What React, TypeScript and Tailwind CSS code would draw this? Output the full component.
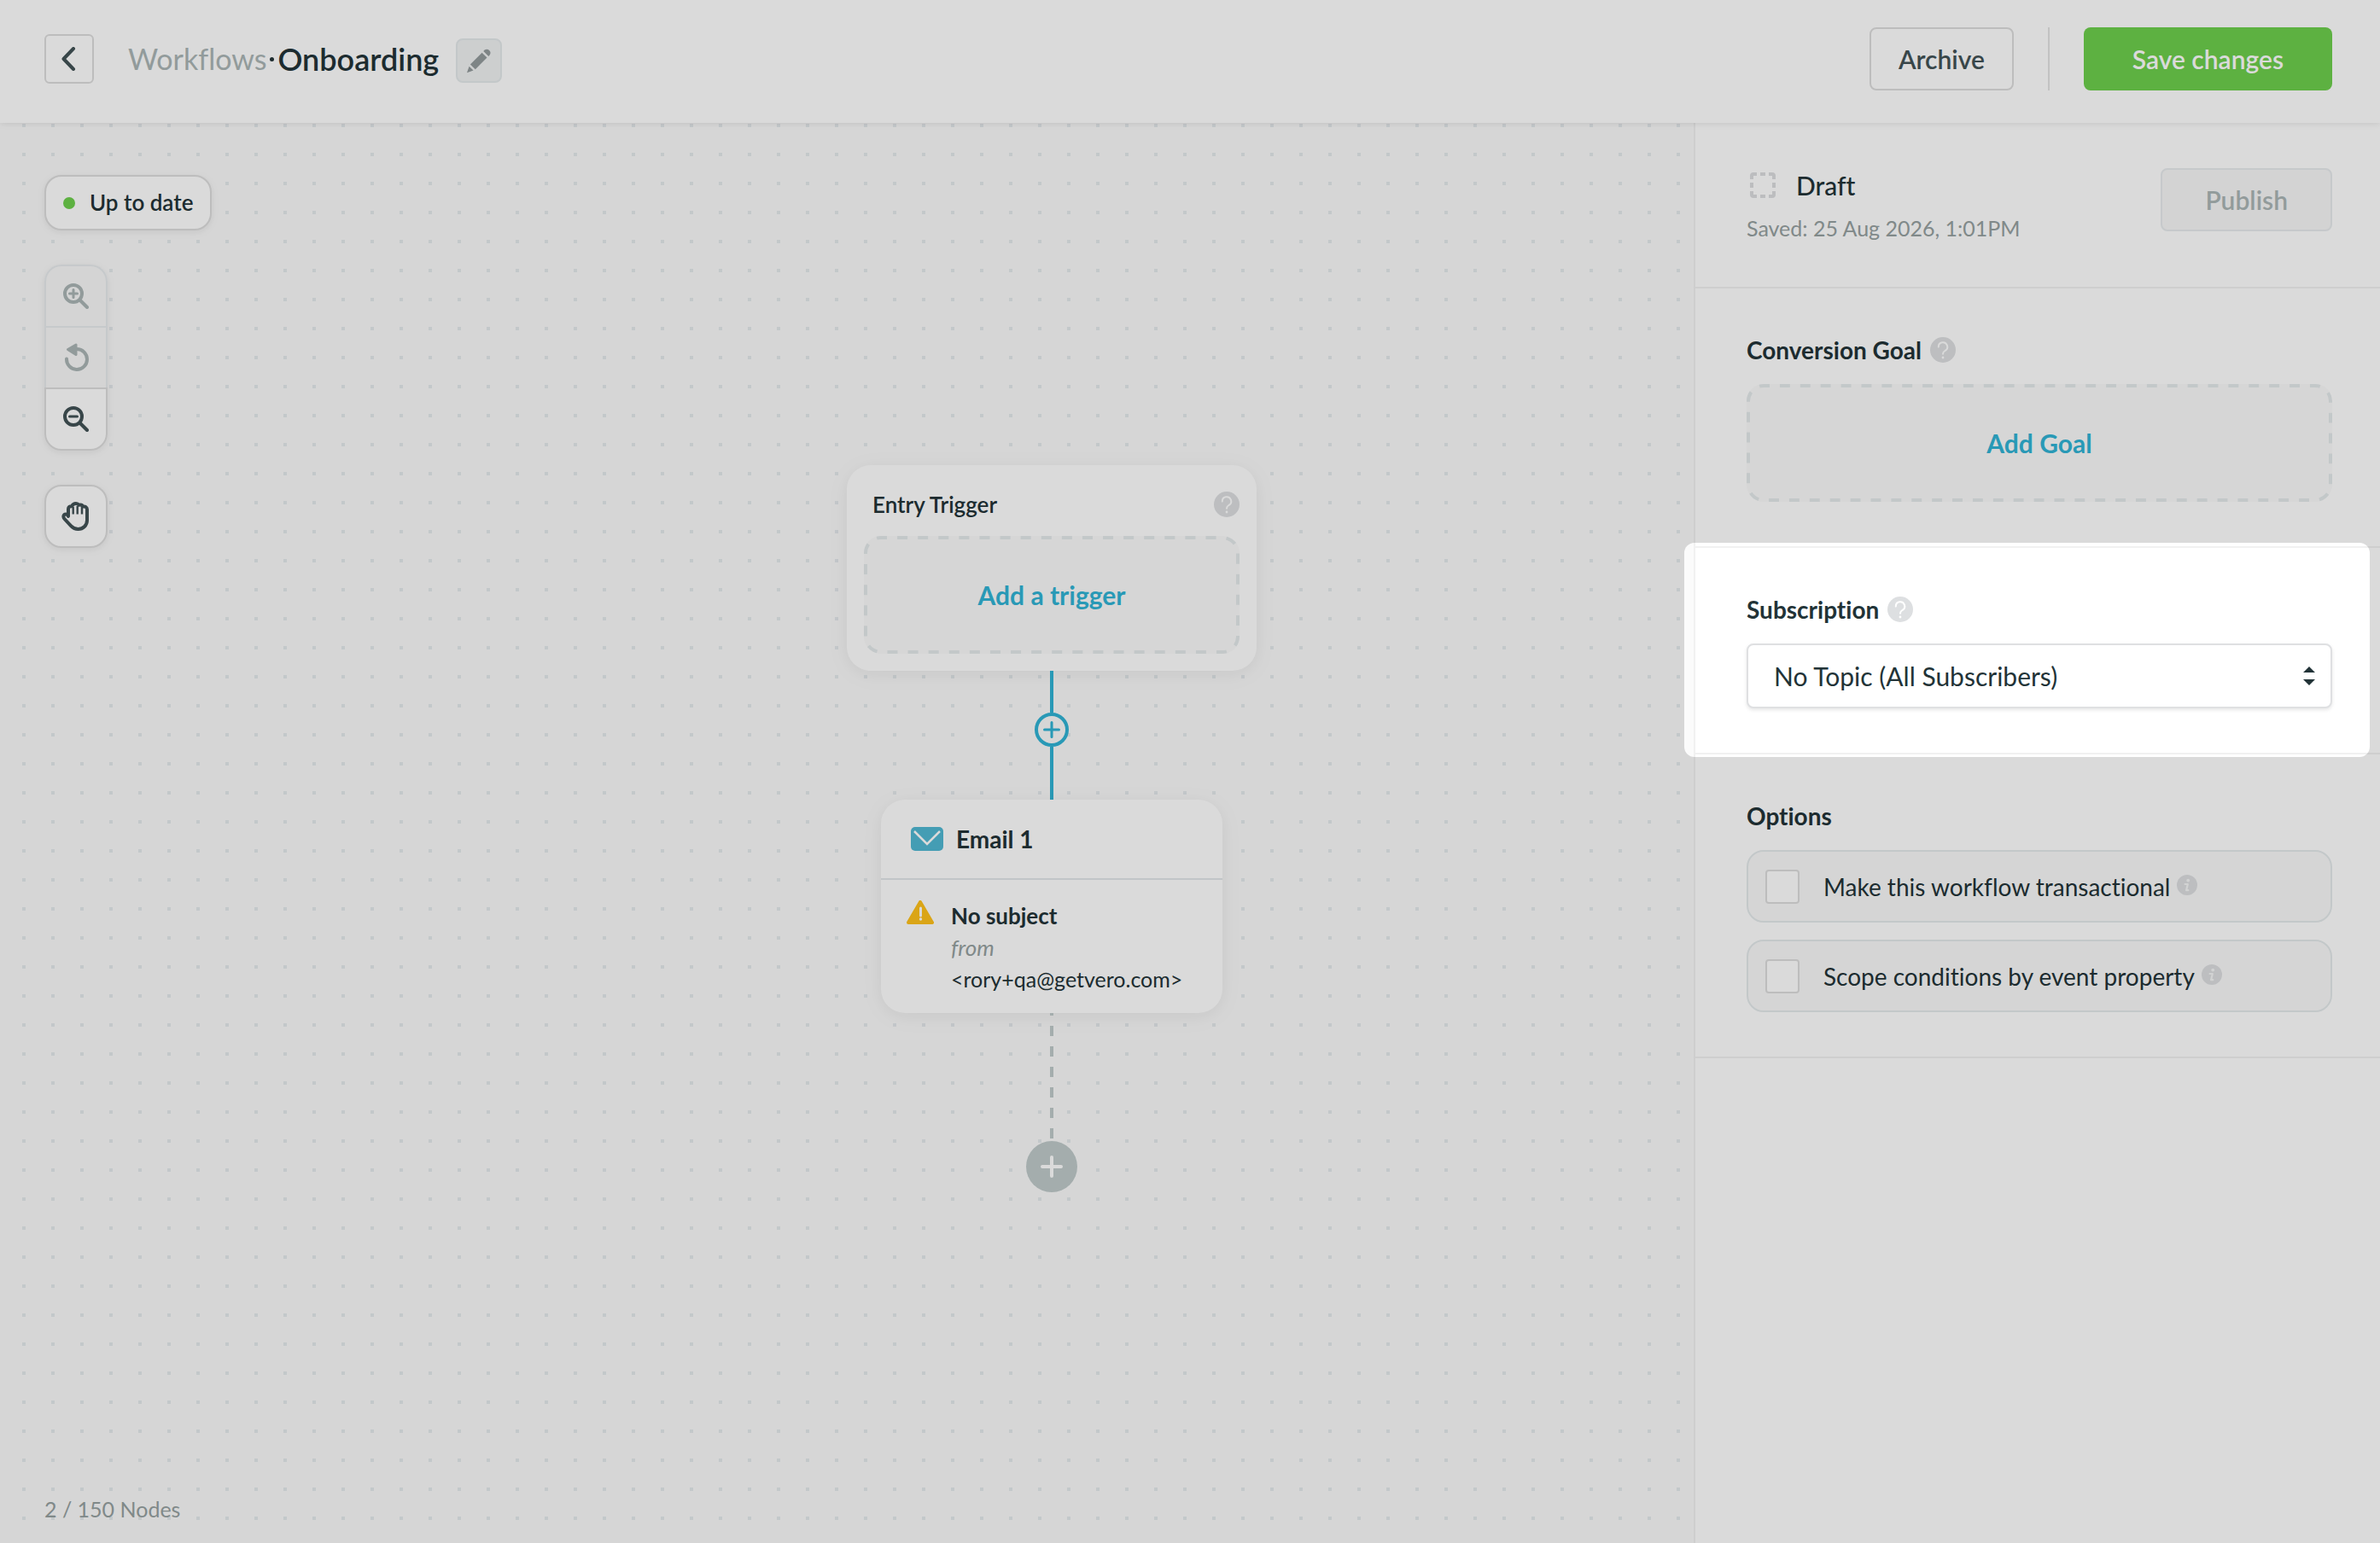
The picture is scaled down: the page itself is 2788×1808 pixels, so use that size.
import type { ReactNode } from "react";

function HelpIcon() {
  return (
    <svg viewBox="0 0 30 30" className="size-[30px] shrink-0" aria-hidden="true">
      <circle cx="15" cy="15" r="15" fill="#dddfe1" />
      <path
        d="M9.8 11.6a5.2 5.2 0 1 1 7.6 4.4c-1.6.9-2.4 1.6-2.4 3.8"
        fill="none"
        stroke="#fff"
        strokeWidth="2"
        strokeLinecap="round"
      />
      <circle cx="15" cy="24" r="1.4" fill="#fff" />
    </svg>
  );
}

function InfoIcon() {
  return (
    <svg viewBox="0 0 24 24" className="size-6 shrink-0" aria-hidden="true">
      <circle cx="12" cy="12" r="12" fill="#dddfe1" />
      <circle cx="13.2" cy="6.6" r="1.9" fill="#f6f7f7" />
      <path
        d="M9.6 11h3.2l-1.7 7.2h2.2"
        fill="none"
        stroke="#f6f7f7"
        strokeWidth="2.2"
        strokeLinecap="round"
        strokeLinejoin="round"
      />
    </svg>
  );
}

function ZoomIcon({ plus }: { plus?: boolean }) {
  return (
    <svg viewBox="0 0 30 30" className="size-[30px]" fill="none" stroke="currentColor" strokeLinecap="round" aria-hidden="true">
      <circle cx="12" cy="12" r="10" strokeWidth="4" />
      <path d="M20 20l8 8" strokeWidth="4" />
      <path d={plus ? "M7.5 12h9M12 7.5v9" : "M7.5 12h9"} strokeWidth="3" />
    </svg>
  );
}

function ResetIcon() {
  return (
    <svg viewBox="-2 0 30 34" className="h-[34px] w-[30px]" fill="none" aria-hidden="true">
      <path d="M2 18.500A12 12 0 1 0 14 7" stroke="currentColor" strokeWidth="4" strokeLinecap="round" />
      <path d="M3.500 7.500l9.500-5.500v11.500z" fill="currentColor" stroke="currentColor" strokeWidth="3" strokeLinejoin="round" />
    </svg>
  );
}

function HandIcon() {
  return (
    <svg viewBox="0 0 34 34" className="size-[34px]" fill="none" stroke="currentColor" strokeLinecap="round" strokeLinejoin="round" aria-hidden="true">
      <path
        d="M8 17V8.500c0-2.500 1.600-3.600 4.200-3.300C13 3 15 2 17 2c1.600 0 2.700.8 3.300 1.800C22.600 3.200 24.500 4 25 5.600c3-.5 5 .6 5 3.400v12.500C30 27.500 25.500 32 19.500 32c-3.800 0-6-1.200-8.200-3.600L3.500 20C1.200 17.300 2.800 14.400 5 14.400c1.300 0 2.200.8 3 2.600z"
        strokeWidth="4"
      />
      <path d="M13.700 6v8.500M18.700 5v9.500M24 6v8.500" strokeWidth="2.400" strokeLinecap="butt" />
    </svg>
  );
}

function PencilIcon() {
  return (
    <svg viewBox="0 0 30 30" className="size-[30px] text-[#949c9d]" fill="currentColor" aria-hidden="true">
      <path d="M3.600 21.700l4.900 4.900L1 29.200z" />
      <path d="M4.900 19.400L18.600 5.700l5.900 5.900L10.800 25.300z" />
      <path d="M20.300 3.900l1.300-1.300a4.300 4.300 0 0 1 6 6L26.300 9.900z" />
    </svg>
  );
}

function Plus({ className }: { className: string }) {
  return (
    <svg viewBox="0 0 26 26" className={className} fill="none" stroke="currentColor" strokeWidth="4" strokeLinecap="round" aria-hidden="true">
      <path d="M13 2v22M2 13h22" />
    </svg>
  );
}

function DashedButton({ dashes, children }: { dashes: number; children: ReactNode }) {
  return (
    <button
      type="button"
      className="relative flex h-[138px] w-full items-center justify-center rounded-[20px] bg-[#fbfbfb] text-[30px] font-bold text-[#31b4d5]"
    >
      <svg className="absolute top-0.5 left-0.5 h-[134px] w-[calc(100%-4px)] overflow-visible" fill="none" aria-hidden="true">
        <rect
          width="100%"
          height="100%"
          rx="18"
          stroke="#e5eaec"
          strokeWidth="4"
          pathLength={dashes * 24}
          strokeDasharray="12 12"
          strokeDashoffset="5"
        />
      </svg>
      {children}
    </button>
  );
}

function Section({ title, help, children }: { title: string; help?: boolean; children: ReactNode }) {
  return (
    <section className="border-b-2 border-[#f1f1f1] pt-[54px] pr-14 pb-[52px] pl-[60px]">
      <h2 className="flex h-9 items-center gap-[10px] text-[28px] leading-9 font-bold">
        {title}
        {help && <HelpIcon />}
      </h2>
      <div className="mt-[22px]">{children}</div>
    </section>
  );
}

function Option({ id, label }: { id: string; label: string }) {
  return (
    <div className="flex h-[85px] items-center rounded-[20px] border-2 border-[#e5eaec] bg-[#fafafa] pl-5">
      <input
        id={id}
        type="checkbox"
        className="size-10 appearance-none rounded border-2 border-[#dedede] bg-white"
      />
      <label htmlFor={id} className="ml-7 text-[28px] leading-9">
        {label}
      </label>
      <span className="mb-1 ml-2">
        <InfoIcon />
      </span>
    </div>
  );
}

export default function App() {
  return (
    <div className="relative flex min-h-screen flex-col overflow-hidden bg-white font-['Lato','Open_Sans',sans-serif] text-[#223337] [font-variant-ligatures:no-common-ligatures]">
      <header className="relative z-10 flex items-center justify-between bg-white pt-8 pr-14 pb-[38px] pl-[52px] shadow-[0_0_8px_rgba(0,0,0,0.12)]">
        <div className="flex items-center">
          <button type="button" aria-label="Back" className="flex size-[58px] items-center justify-center rounded-md border-2 border-[#dedede] text-[#425256]">
            <svg viewBox="0 0 18 28" className="h-7 w-[18px]" fill="none" stroke="currentColor" strokeWidth="4" strokeLinecap="round" strokeLinejoin="round" aria-hidden="true">
              <path d="M14 2L2.500 14 14 26" />
            </svg>
          </button>
          <h1 className="ml-10 flex items-center text-[36px] leading-10">
            <a href="#workflows" className="text-[34px] text-[#abb6b6]">
              Workflows
            </a>
            <span className="mx-1 size-[5px] rounded-full bg-[#223337]" />
            <span className="font-semibold">Onboarding</span>
          </h1>
          <button type="button" aria-label="Rename" className="mt-1 ml-5 flex h-[52px] w-[54px] items-center justify-center rounded-lg border-2 border-[#e5eaec] bg-[#f0f2f3]">
            <PencilIcon />
          </button>
        </div>
        <div className="flex gap-10">
          <button type="button" className="h-[74px] rounded-lg border-2 border-[#dedede] px-8 text-[30px] font-semibold text-[#425256]">
            Archive
          </button>
          <span className="w-0.5 bg-[#e3e3e3]" />
          <button type="button" className="h-[74px] rounded-lg bg-[#6dcf4d] px-[57px] text-[30px] font-semibold text-white">
            Save changes
          </button>
        </div>
      </header>

      <div className="flex flex-1">
        <main className="relative flex flex-1 flex-col items-start justify-between bg-[#fbfbfb] bg-[conic-gradient(at_4px_4px,transparent_75%,#e5eaed_0)] bg-[length:34px_34px] bg-[position:26px_1px] pt-[61px] pb-[22px] pl-[52px]">
          <div className="flex flex-col items-start gap-10">
            <div className="flex h-[65px] items-center gap-[17px] rounded-[20px] border-2 border-[#dedede] bg-white px-5 text-[26px] font-semibold shadow-[0_2px_10px_rgba(0,0,0,0.08)]">
              <span className="size-[14px] rounded-full bg-[#6dcf4d]" />
              Up to date
            </div>
            <div className="flex w-[74px] flex-col rounded-[20px] shadow-[0_2px_10px_rgba(0,0,0,0.08)]">
              <button type="button" disabled aria-label="Zoom in" className="flex h-[72px] items-center justify-center rounded-t-[20px] border-2 border-b-0 border-[#e8ecee] bg-[#f8f8f8] text-[#abb6b6]">
                <ZoomIcon plus />
              </button>
              <button type="button" disabled aria-label="Reset zoom" className="flex h-[72px] items-center justify-center border-2 border-b-0 border-[#e8ecee] bg-[#f8f8f8] text-[#abb6b6]">
                <ResetIcon />
              </button>
              <button type="button" aria-label="Zoom out" className="flex h-[74px] items-center justify-center rounded-b-[20px] border-2 border-[#dedede] bg-white text-[#425256]">
                <ZoomIcon />
              </button>
            </div>
            <button type="button" aria-label="Pan" className="flex size-[74px] items-center justify-center rounded-[20px] border-2 border-[#dedede] bg-white text-[#425256] shadow-[0_2px_10px_rgba(0,0,0,0.08)]">
              <HandIcon />
            </button>
          </div>
          <p className="text-[25px] leading-9 text-[#96a1a1]">2 / 150 Nodes</p>

          <div className="absolute top-[401px] left-[992px] flex w-[480px] flex-col items-center">
            <section className="w-full rounded-[28px] bg-white px-5 pt-7 pb-5 shadow-[0_4px_24px_rgba(0,0,0,0.07)]">
              <div className="mb-[19px] flex h-9 items-center justify-between pl-[10px]">
                <h2 className="text-[26px] font-semibold">Entry Trigger</h2>
                <HelpIcon />
              </div>
              <DashedButton dashes={46}>Add a trigger</DashedButton>
            </section>
            <span className="h-[49px] w-1 bg-[#31b4d5]" />
            <button type="button" aria-label="Insert step" className="flex size-10 items-center justify-center rounded-full border-4 border-[#31b4d5] bg-[#fbfbfb] text-[#31b4d5]">
              <Plus className="size-5" />
            </button>
            <span className="h-[62px] w-1 bg-[#31b4d5]" />
            <section className="w-[400px] rounded-[28px] bg-white shadow-[0_4px_24px_rgba(0,0,0,0.07)]">
              <div className="flex h-[94px] items-center gap-[15px] border-b-2 border-[#e2e7ea] pl-[35px]">
                <svg viewBox="0 0 38 28" className="h-7 w-[38px]" fill="none" aria-hidden="true">
                  <rect width="38" height="28" rx="5" fill="#50b8d3" />
                  <path d="M4 5l15 15L34 5" stroke="#fff" strokeWidth="2.500" />
                </svg>
                <h2 className="text-[28px] font-bold">Email 1</h2>
              </div>
              <div className="flex gap-5 pt-6 pb-[21px] pl-[30px]">
                <svg viewBox="0 0 32 28" className="h-7 w-8" aria-hidden="true">
                  <path d="M16 2l14 24H2z" fill="#ffc21b" stroke="#ffc21b" strokeWidth="4" strokeLinejoin="round" />
                  <path d="M16.500 9v9" stroke="#fff" strokeWidth="3" strokeLinecap="round" />
                  <circle cx="16.500" cy="22" r="1.700" fill="#fff" />
                </svg>
                <div className="text-[26px] leading-[37px]">
                  <p className="font-bold">No subject</p>
                  <p className="text-[#96a1a1] italic">from</p>
                  <p className="text-[25px]">&lt;rory+qa@getvero.com&gt;</p>
                </div>
              </div>
            </section>
            <span className="h-[150px] w-1 bg-[linear-gradient(#c0cbcb_50%,transparent_0)] bg-[length:4px_24px] bg-[position:0_15px]" />
            <button type="button" aria-label="Add step" className="flex size-[60px] items-center justify-center rounded-full bg-[#c0cbcb] text-white">
              <Plus className="size-[26px]" />
            </button>
          </div>
        </main>

        <aside className="w-[804px] border-l-2 border-[#f1f1f1] bg-white">
          <section className="flex items-start justify-between border-b-2 border-[#f1f1f1] pt-[53px] pr-14 pb-[51px] pl-[60px]">
            <div>
              <div className="flex h-10 items-center">
                <svg viewBox="0 0 30 30" className="ml-1 size-[30px] text-[#dcdee0]" fill="none" stroke="currentColor" strokeWidth="4" aria-hidden="true">
                  <path d="M2 8V4a2 2 0 0 1 2-2h4M22 2h4a2 2 0 0 1 2 2v4M28 22v4a2 2 0 0 1-2 2h-4M8 28H4a2 2 0 0 1-2-2v-4M12 2h6M12 28h6M2 12v6M28 12v6" />
                </svg>
                <h2 className="ml-6 text-[30px] font-medium">Draft</h2>
              </div>
              <p className="mt-3 text-[25px] leading-9 text-[#96a1a1]">Saved: 25 Aug 2026, 1:01PM</p>
            </div>
            <button type="button" disabled className="h-[74px] rounded-lg border-2 border-[#e8ecee] bg-[#f7f7f7] px-[50px] text-[30px] font-semibold text-[#abb6b6]">
              Publish
            </button>
          </section>

          <Section title="Conversion Goal" help>
            <DashedButton dashes={67}>Add Goal</DashedButton>
          </Section>

          <div className="relative">
            <Section title="Subscription" help>
              <div className="relative">
                <select
                  aria-label="Subscription"
                  className="h-[76px] w-full appearance-none rounded-lg border-2 border-[#dfe0e2] bg-white px-[30px] text-[30px] shadow-[0_2px_4px_rgba(0,0,0,0.1)]"
                >
                  <option>No Topic (All Subscribers)</option>
                </select>
                <svg viewBox="0 0 14 22" className="pointer-events-none absolute top-[27px] right-5 h-[22px] w-[14px]" fill="currentColor" aria-hidden="true">
                  <path d="M7 0l7 7H0zM7 22l7-7H0z" />
                </svg>
              </div>
            </Section>
            <div className="pointer-events-none absolute top-[-6px] right-3 bottom-[-3px] left-[-13px] z-20 rounded-xl shadow-[0_0_0_4000px_rgba(0,0,0,0.145)]" />
          </div>

          <Section title="Options">
            <div className="flex flex-col gap-5">
              <Option id="transactional" label="Make this workflow transactional" />
              <Option id="scope" label="Scope conditions by event property" />
            </div>
          </Section>
        </aside>
      </div>
    </div>
  );
}
